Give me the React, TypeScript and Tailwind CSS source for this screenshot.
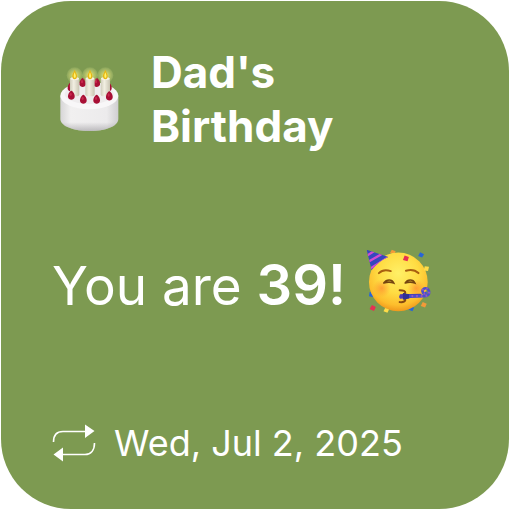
function Candle({ x }: { x: number }) {
  return (
    <g>
      <circle cx={x} cy="63" r="24" fill="url(#glow)" />
      <rect x={x - 14} y="70" width="28" height="56" rx="6" fill="url(#wax)" />
      <ellipse cx={x} cy="73" rx="13" ry="4" fill="#f5f2e5" />
      <path d={`M${x} 46C${x + 3} 54 ${x + 8} 60 ${x + 7} 67C${x + 6} 77 ${x - 6} 77 ${x - 7} 67C${x - 8} 60 ${x - 3} 54 ${x} 46Z`} fill="#e8b512" />
      <path d={`M${x} 54C${x + 5} 65 ${x + 4} 70 ${x} 71C${x - 4} 70 ${x - 4} 63 ${x} 54Z`} fill="#fff36b" />
    </g>
  );
}

function Berry({ x, y }: { x: number; y: number }) {
  return (
    <g>
      <path d={`M${x} ${y - 14}C${x + 6} ${y - 12} ${x + 11} ${y - 2} ${x + 10} ${y + 5}C${x + 8} ${y + 16} ${x - 8} ${y + 16} ${x - 10} ${y + 5}C${x - 11} ${y - 2} ${x - 6} ${y - 12} ${x} ${y - 14}Z`} fill="#a80f35" />
      <ellipse cx={x - 2} cy={y - 3} rx="3" ry="5" fill="#c9284f" />
    </g>
  );
}

function Cake() {
  return (
    <svg role="img" aria-label="Birthday cake" viewBox="24 32 186 204" className="h-[68px] w-[62px] shrink-0">
      <defs>
        <radialGradient id="glow">
          <stop offset="0" stopColor="#fff27a" stopOpacity="0.95" />
          <stop offset="0.55" stopColor="#d8dc78" stopOpacity="0.6" />
          <stop offset="1" stopColor="#c8d684" stopOpacity="0.2" />
        </radialGradient>
        <linearGradient id="wax">
          <stop offset="0" stopColor="#d0cdbc" />
          <stop offset="0.4" stopColor="#f2efe2" />
          <stop offset="1" stopColor="#c9c5b2" />
        </linearGradient>
        <linearGradient id="side">
          <stop offset="0" stopColor="#d6d5d6" />
          <stop offset="0.18" stopColor="#f1f0f0" />
          <stop offset="0.8" stopColor="#ecebec" />
          <stop offset="1" stopColor="#cfced0" />
        </linearGradient>
        <linearGradient id="base" x2="0" y2="1">
          <stop offset="0.75" stopColor="#a6a4a8" stopOpacity="0" />
          <stop offset="1" stopColor="#a6a4a8" stopOpacity="0.7" />
        </linearGradient>
      </defs>
      <path d="M28 124V194C29 217 70 230 116 230S201 217 202 194V124Z" fill="url(#side)" />
      <path d="M28 124V194C29 217 70 230 116 230S201 217 202 194V124Z" fill="url(#base)" />
      <ellipse cx="115" cy="124" rx="87" ry="41" fill="#f8f7f8" />
      <ellipse cx="115" cy="119" rx="74" ry="30" fill="#efedee" />
      <Berry x={60} y={98} />
      <Berry x={95} y={85} />
      <Berry x={137} y={85} />
      <Berry x={172} y={98} />
      <Candle x={71} />
      <Candle x={117} />
      <Candle x={163} />
      <Berry x={61} y={123} />
      <Berry x={97} y={135} />
      <Berry x={137} y={135} />
      <Berry x={175} y={125} />
    </svg>
  );
}

function PartyFace() {
  return (
    <svg role="img" aria-label="Partying face" viewBox="20 15 200 200" className="size-[66px] shrink-0">
      <defs>
        <radialGradient id="face" cx="0.5" cy="0.35" r="0.68">
          <stop offset="0" stopColor="#fff067" />
          <stop offset="0.5" stopColor="#ffdc43" />
          <stop offset="0.8" stopColor="#fdbd2c" />
          <stop offset="1" stopColor="#ec8d18" />
        </radialGradient>
        <radialGradient id="cheek">
          <stop offset="0" stopColor="#ff7a2e" stopOpacity="0.6" />
          <stop offset="1" stopColor="#ff8a2e" stopOpacity="0" />
        </radialGradient>
        <clipPath id="hat">
          <path d="M22 20L88 42Q60 52 37 82Z" />
        </clipPath>
      </defs>
      <path d="M98 20l12 5-5 10-12-5z" fill="#f39a38" />
      <path d="M31 148l14 2-2 14-14-3z" fill="#2865d8" />
      <path d="M153 192l13 3-5 12-12-5z" fill="#2865d8" />
      <circle cx="118" cy="118" r="89" fill="url(#face)" />
      <circle cx="68" cy="137" r="27" fill="url(#cheek)" />
      <circle cx="172" cy="137" r="27" fill="url(#cheek)" />
      <g clipPath="url(#hat)">
        <path d="M20 15H90V85H20Z" fill="#3548bd" />
        <path d="M20 40L45 24M23 59L68 33M30 79L84 45" stroke="#d34bd0" strokeWidth="7" />
      </g>
      <g fill="none" strokeLinecap="round">
        <path d="M59 91Q73 77 95 85M141 84Q164 77 179 91" stroke="#a86010" strokeWidth="6" />
        <path d="M74 121Q80 112 90 112T104 121Q90 116 74 121M139 121Q144 112 154 112T168 121Q154 116 139 121" stroke="#754510" strokeWidth="5" />
        <path d="M122 143Q140 143 139 150Q137 158 124 162Q140 163 139 173Q136 181 122 179" stroke="#864812" strokeWidth="6" />
      </g>
      <path d="M123 155L188 154V164L123 169Q118 162 123 155Z" fill="#4d3bb4" />
      <path d="M132 151L151 155V168L132 172Z" fill="#2f3095" />
      <path d="M151 161H197Q213 160 211 146Q207 134 196 138Q188 143 193 151Q199 156 203 149" fill="none" stroke="#4a50cc" strokeWidth="8" />
      <path d="M158 161H197Q213 160 211 146Q207 134 196 138Q188 143 193 151Q199 156 203 149" fill="none" stroke="#9955c2" strokeWidth="7" strokeDasharray="5 9" />
      <path d="M137 38l13 4-4 13-14-4z" fill="#e62f52" />
      <path d="M184 28l12 6-6 10-12-5z" fill="#2865d8" />
      <path d="M198 70l13 2-3 13-13-2z" fill="#ffdc48" />
      <path d="M192 179l12 5-5 11-13-4z" fill="#f39a38" />
      <path d="M38 188l12 6-6 12-13-6z" fill="#e62f52" />
      <path d="M78 197l12 4-5 10-12-4z" fill="#ffdc48" />
    </svg>
  );
}

function RepeatIcon() {
  return (
    <svg aria-hidden="true" viewBox="0 0 44 38" className="h-[38px] w-11 shrink-0">
      <path d="M1.5 18C1.5 11 5 7.5 11 7.5H34M42.5 19C42.5 26 39 30.5 33 30.5H10" fill="none" stroke="white" strokeWidth="1.6" />
      <path d="M33 0.5L42.5 7L33 14ZM11 23.5L1.5 30.5L11 37.5Z" fill="white" />
    </svg>
  );
}

export default function App() {
  return (
    <main className="w-full bg-white p-px font-['Inter','Liberation_Sans',sans-serif] text-white">
      <article className="flex aspect-square w-full flex-col justify-between rounded-[70px] bg-[#7d9a51] px-[51px] pt-11 pb-10">
        <header className="flex items-start gap-[30px]">
          <div className="flex pt-5 pl-[7px]">
            <Cake />
          </div>
          <h1 className="w-min text-[44px] leading-[54px] font-bold">Dad's Birthday</h1>
        </header>
        <div className="flex items-start gap-5">
          <p className="text-[53px] leading-[74px] whitespace-nowrap">
            You are <strong className="text-[56px] font-semibold">39!</strong>
          </p>
          <PartyFace />
        </div>
        <footer className="flex items-center gap-[18px]">
          <RepeatIcon />
          <time dateTime="2025-07-02" className="text-[36px] leading-[52px] whitespace-nowrap">
            Wed, Jul 2, 2025
          </time>
        </footer>
      </article>
    </main>
  );
}
